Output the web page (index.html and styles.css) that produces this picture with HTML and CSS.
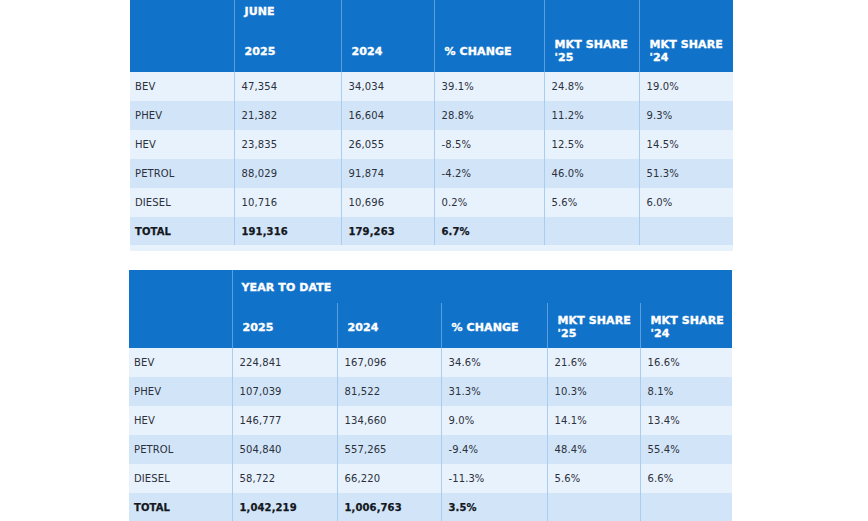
FILE: index.html
```html
<!DOCTYPE html>
<html lang="en">
<head>
<meta charset="utf-8">
<title>Sales tables</title>
<link rel="stylesheet" href="styles.css">
</head>
<body>
<div class="page">
  <div class="block block-june">
    <table class="sales sales-june">
      <colgroup>
        <col style="width:104px"><col style="width:107px"><col style="width:93px">
        <col style="width:110px"><col style="width:95px"><col style="width:94px">
      </colgroup>
      <thead>
        <tr class="head-top">
          <th></th>
          <th>JUNE</th>
          <th></th>
          <th></th>
          <th></th>
          <th></th>
        </tr>
        <tr class="head-sub">
          <th></th>
          <th>2025</th>
          <th>2024</th>
          <th>% CHANGE</th>
          <th>MKT SHARE<br>'25</th>
          <th>MKT SHARE<br>'24</th>
        </tr>
      </thead>
      <tbody>
        <tr><td>BEV</td><td>47,354</td><td>34,034</td><td>39.1%</td><td>24.8%</td><td>19.0%</td></tr>
        <tr><td>PHEV</td><td>21,382</td><td>16,604</td><td>28.8%</td><td>11.2%</td><td>9.3%</td></tr>
        <tr><td>HEV</td><td>23,835</td><td>26,055</td><td>-8.5%</td><td>12.5%</td><td>14.5%</td></tr>
        <tr><td>PETROL</td><td>88,029</td><td>91,874</td><td>-4.2%</td><td>46.0%</td><td>51.3%</td></tr>
        <tr><td>DIESEL</td><td>10,716</td><td>10,696</td><td>0.2%</td><td>5.6%</td><td>6.0%</td></tr>
        <tr class="total"><td>TOTAL</td><td>191,316</td><td>179,263</td><td>6.7%</td><td></td><td></td></tr>
      </tbody>
    </table>
  </div>

  <div class="block block-ytd">
    <table class="sales sales-ytd">
      <colgroup>
        <col style="width:103px"><col style="width:105px"><col style="width:104px">
        <col style="width:106px"><col style="width:93px"><col style="width:92px">
      </colgroup>
      <thead>
        <tr class="head-top">
          <th rowspan="2" class="corner"></th>
          <th colspan="5">YEAR TO DATE</th>
        </tr>
        <tr class="head-sub">
          <th>2025</th>
          <th>2024</th>
          <th>% CHANGE</th>
          <th>MKT SHARE<br>'25</th>
          <th>MKT SHARE<br>'24</th>
        </tr>
      </thead>
      <tbody>
        <tr><td>BEV</td><td>224,841</td><td>167,096</td><td>34.6%</td><td>21.6%</td><td>16.6%</td></tr>
        <tr><td>PHEV</td><td>107,039</td><td>81,522</td><td>31.3%</td><td>10.3%</td><td>8.1%</td></tr>
        <tr><td>HEV</td><td>146,777</td><td>134,660</td><td>9.0%</td><td>14.1%</td><td>13.4%</td></tr>
        <tr><td>PETROL</td><td>504,840</td><td>557,265</td><td>-9.4%</td><td>48.4%</td><td>55.4%</td></tr>
        <tr><td>DIESEL</td><td>58,722</td><td>66,220</td><td>-11.3%</td><td>5.6%</td><td>6.6%</td></tr>
        <tr class="total"><td>TOTAL</td><td>1,042,219</td><td>1,006,763</td><td>3.5%</td><td></td><td></td></tr>
      </tbody>
    </table>
  </div>
</div>
</body>
</html>
```

FILE: styles.css
```css
html, body {
  margin: 0;
  padding: 0;
  background: #ffffff;
}

.page {
  display: flex;
  flex-direction: column;
  gap: 19px;
  padding-left: 130px;
}

.block {
  width: 603px;
}

.block-june {
  margin-top: -6px;
  background: #e8f2fd;
  padding-bottom: 6px;
}

.block-ytd {
  margin-left: -1px;
}

.sales {
  width: 603px;
  table-layout: fixed;
  border-collapse: collapse;
  border-spacing: 0;
  font-family: "DejaVu Sans", "Liberation Sans", sans-serif;
}

.sales th,
.sales td {
  box-sizing: border-box;
}

.sales th {
  background: #1172c9;
  color: #ffffff;
  font-family: "DejaVu Sans", sans-serif;
  font-weight: bold;
  font-size: 11px;
  line-height: 13px;
  letter-spacing: 0.1px;
  -webkit-text-stroke: 0.35px #ffffff;
  text-align: left;
  vertical-align: middle;
  padding: 1px 0 0 10px;
  white-space: nowrap;
}

.sales .head-top th {
  height: 33px;
}

.sales .head-sub th {
  height: 45px;
  padding-top: 3px;
}

.sales-june th + th {
  border-left: 1px solid #5a9fe0;
}

.sales-ytd .corner {
  border-right: 1px solid #5a9fe0;
}

.sales-ytd .head-top th[colspan] {
  padding-left: 9px;
}

.sales-ytd .head-sub th + th {
  border-left: 1px solid #5a9fe0;
}

.sales td {
  height: 29px;
  padding: 1px 0 0 7px;
  font-size: 10px;
  line-height: 12px;
  letter-spacing: 0.1px;
  color: #2b303a;
  vertical-align: middle;
  white-space: nowrap;
}

.sales td:first-child {
  padding-left: 5px;
}

.sales td + td {
  border-left: 1px solid #a8cdf0;
}

.sales tbody tr:nth-child(odd) td {
  background: #e8f2fd;
}

.sales tbody tr:nth-child(even) td {
  background: #d2e5f8;
}

.sales tbody tr.total td {
  height: 28px;
  font-weight: bold;
  color: #14171d;
  -webkit-text-stroke: 0.25px #14171d;
}
```
